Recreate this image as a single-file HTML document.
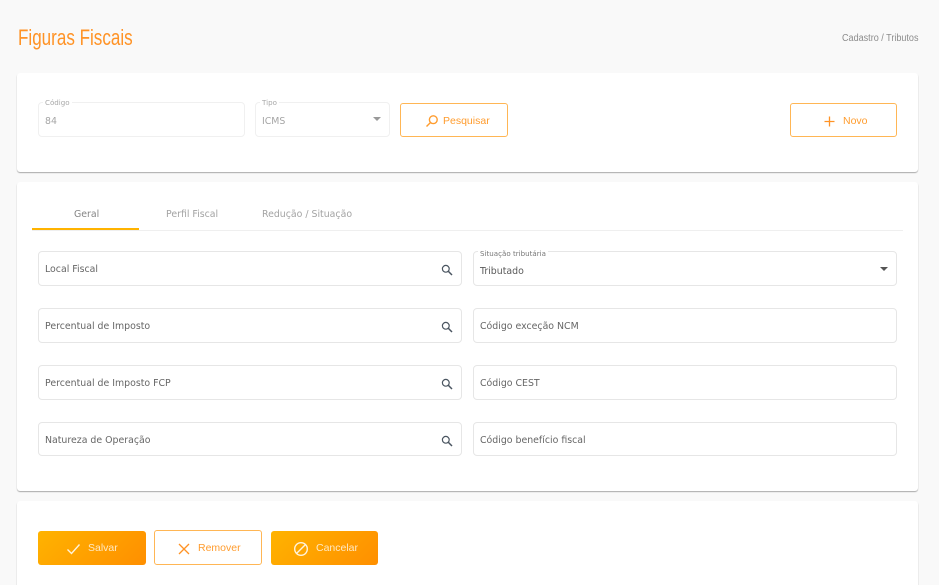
<!DOCTYPE html>
<html lang="pt"><head><meta charset="utf-8"><title>Figuras Fiscais</title>
<style>
html,body{margin:0;padding:0;width:939px;height:585px;overflow:hidden}
body{background:#f9f9f9;position:relative;font-family:"DejaVu Sans","Liberation Sans",sans-serif}
.a{position:absolute}
.card{position:absolute;left:17px;width:901px;background:#fff;border-radius:3px;box-shadow:0 1px 1px #aaa}
.f{position:absolute;box-sizing:border-box;border:1px solid #e6e6e6;border-radius:4px;background:#fff;height:35px;width:424px}
.t{position:absolute;left:6px;top:11px;font-size:9.4px;line-height:14px;color:#666;white-space:nowrap}
.lb{position:absolute;top:-5px;left:4px;padding:0 2px;background:#fff;font-size:7.1px;line-height:10px;color:#8a8a8a;white-space:nowrap}
.s{position:absolute;left:402px;top:12px}
.caret{position:absolute;width:0;height:0;border-left:4px solid transparent;border-right:4px solid transparent;border-top:4px solid #666}
.b{position:absolute;box-sizing:border-box;border-radius:3px;font-family:"Liberation Sans",sans-serif;font-size:10.5px;height:34px}
.o{border:1.5px solid #ffb655;background:#fff;color:#ff9c2e}
.g{background:linear-gradient(135deg,#ffb300,#ff8f00);color:#ffe9c4}
.b span{position:absolute;top:10px;line-height:14px;white-space:nowrap}
.b svg{position:absolute}
.tab{position:absolute;top:208px;font-size:9.4px;line-height:13px;color:#a3a3a3;white-space:nowrap}
</style></head><body>
<div class="a" style="left:18px;top:24px;font:22px/28px 'Liberation Sans',sans-serif;color:#ff9326;white-space:nowrap;transform:scaleX(.775);transform-origin:0 0">Figuras Fiscais</div>
<div class="a" style="right:21px;top:32px;font:10px/13px 'Liberation Sans',sans-serif;color:#8c8c8c;white-space:nowrap;transform:scaleX(.905);transform-origin:100% 0">Cadastro / Tributos</div>

<div class="card" style="top:73px;height:99px"></div>
<div class="f" style="left:38px;top:102px;width:207px;height:35px;border-color:#f0f0f0"><div class="lb" style="color:#a8a8a8">Código</div><div class="t" style="color:#a5a5a5;top:12px">84</div></div>
<div class="f" style="left:255px;top:102px;width:135px;height:35px;border-color:#f0f0f0"><div class="lb" style="color:#a8a8a8">Tipo</div><div class="t" style="color:#a5a5a5;top:12px">ICMS</div><div class="caret" style="left:117px;top:14px;border-top-color:#999"></div></div>
<div class="b o" style="left:400px;top:103px;width:108px"><svg style="left:24px;top:10px" width="14" height="14" viewBox="0 0 14 14" fill="none" stroke="#ff9c2e" stroke-width="1.4"><circle cx="8.3" cy="5.7" r="3.9"/><path d="M5.4 8.6L1.5 12.5"/></svg><span style="left:42px">Pesquisar</span></div>
<div class="b o" style="left:790px;top:103px;width:107px"><svg style="left:32px;top:11px" width="13" height="13" viewBox="0 0 13 13" stroke="#ff9326" stroke-width="1.3"><path d="M6.5 1.5v10M1.5 6.5h10"/></svg><span style="left:52px">Novo</span></div>

<div class="card" style="top:182px;height:309px"></div>
<div class="a" style="left:32px;top:230px;width:871px;height:1px;background:#efefef"></div>
<div class="a" style="left:32px;top:228px;width:107px;height:2px;background:#ffb300"></div>
<div class="tab" style="left:74px;color:#858585">Geral</div>
<div class="tab" style="left:166px">Perfil Fiscal</div>
<div class="tab" style="left:262px">Redução / Situação</div>

<svg width="0" height="0" style="position:absolute"><symbol id="m" viewBox="0 0 12 12"><circle cx="4.8" cy="4.8" r="3.4" fill="none" stroke="#4a5560" stroke-width="1.2"/><path d="M7.4 7.4L11 11" stroke="#4a5560" stroke-width="1.5"/></symbol></svg>

<div class="f" style="left:38px;top:251px"><div class="t">Local Fiscal</div><svg class="s" width="12" height="12"><use href="#m"/></svg></div>
<div class="f" style="left:38px;top:308px"><div class="t">Percentual de Imposto</div><svg class="s" width="12" height="12"><use href="#m"/></svg></div>
<div class="f" style="left:38px;top:365px"><div class="t">Percentual de Imposto FCP</div><svg class="s" width="12" height="12"><use href="#m"/></svg></div>
<div class="f" style="left:38px;top:422px;height:34px"><div class="t">Natureza de Operação</div><svg class="s" width="12" height="12"><use href="#m"/></svg></div>

<div class="f" style="left:473px;top:251px"><div class="lb" style="color:#777;top:-3px">Situação tributária</div><div class="t" style="top:13px;color:#5a5a5a">Tributado</div><div class="caret" style="left:406px;top:15px;border-top-color:#555"></div></div>
<div class="f" style="left:473px;top:308px"><div class="t">Código exceção NCM</div></div>
<div class="f" style="left:473px;top:365px"><div class="t">Código CEST</div></div>
<div class="f" style="left:473px;top:422px;height:34px"><div class="t">Código benefício fiscal</div></div>

<div class="card" style="top:501px;height:84px;border-radius:3px 3px 0 0"></div>
<div class="b g" style="left:38px;top:531px;width:108px"><svg style="left:28px;top:11px" width="15" height="14" viewBox="0 0 15 14" fill="none" stroke="#fff3dc" stroke-width="1.4"><path d="M1.5 7.5l4 4 8-9"/></svg><span style="left:50px;top:10px">Salvar</span></div>
<div class="b o" style="left:154px;top:530px;width:108px;height:35px"><svg style="left:23px;top:12px" width="12" height="12" viewBox="0 0 12 12" fill="none" stroke="#ff9326" stroke-width="1.3"><path d="M1 1l10 10M11 1L1 11"/></svg><span style="left:43px;top:10px">Remover</span></div>
<div class="b g" style="left:271px;top:531px;width:107px"><svg style="left:22px;top:10px" width="16" height="16" viewBox="0 0 16 16" fill="none" stroke="#fff3dc" stroke-width="1.4"><circle cx="8" cy="8" r="6.3"/><path d="M3.6 12.4l8.8-8.8"/></svg><span style="left:45px;top:10px">Cancelar</span></div>
</body></html>
